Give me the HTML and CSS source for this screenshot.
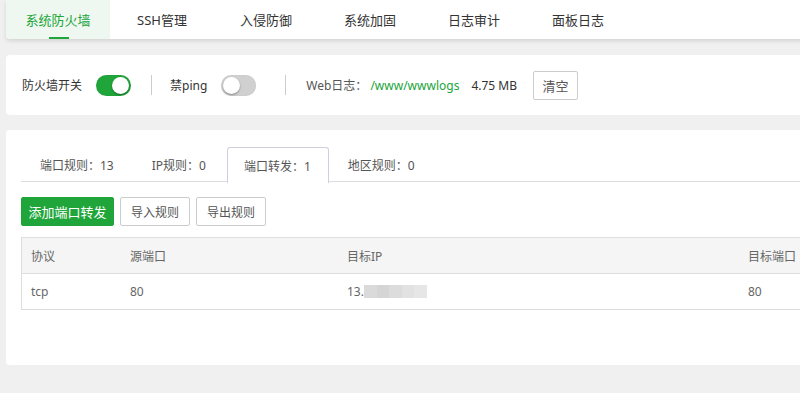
FILE: index.html
```html
<!DOCTYPE html>
<html lang="zh">
<head>
<meta charset="utf-8">
<title>系统防火墙</title>
<link rel="stylesheet" href="styles.css">
</head>
<body>
<div class="page">
  <nav class="topnav">
    <a class="nav-item active">系统防火墙</a>
    <a class="nav-item">SSH管理</a>
    <a class="nav-item">入侵防御</a>
    <a class="nav-item">系统加固</a>
    <a class="nav-item">日志审计</a>
    <a class="nav-item">面板日志</a>
  </nav>

  <section class="card settings">
    <span class="label">防火墙开关</span>
    <span class="switch on"><span class="knob"></span></span>
    <span class="divider"></span>
    <span class="label">禁ping</span>
    <span class="switch"><span class="knob"></span></span>
    <span class="divider wide"></span>
    <span class="label muted">Web日志：</span>
    <span class="link">/www/wwwlogs</span>
    <span class="size">4.75 MB</span>
    <button class="btn btn-clear">清空</button>
  </section>

  <section class="card main">
    <ul class="tabs">
      <li class="tab">端口规则：13</li>
      <li class="tab">IP规则：0</li>
      <li class="tab active">端口转发：1</li>
      <li class="tab">地区规则：0</li>
    </ul>
    <div class="toolbar">
      <button class="btn btn-primary">添加端口转发</button>
      <button class="btn">导入规则</button>
      <button class="btn">导出规则</button>
    </div>
    <div class="table">
      <div class="row head">
        <div class="cell">协议</div>
        <div class="cell">源端口</div>
        <div class="cell">目标IP</div>
        <div class="cell">目标端口</div>
      </div>
      <div class="row">
        <div class="cell">tcp</div>
        <div class="cell">80</div>
        <div class="cell">13.<span class="blur"></span></div>
        <div class="cell">80</div>
      </div>
    </div>
  </section>
</div>
</body>
</html>
```

FILE: styles.css
```css
html, body {
  margin: 0;
  padding: 0;
  background: #f0f0f0;
  overflow: hidden;
}
body {
  font-family: "Noto Sans", "Noto Sans CJK SC", sans-serif;
  font-size: 12px;
  color: #333;
}
.page {
  width: 820px;
  padding-left: 6px;
}
.topnav {
  display: flex;
  height: 39px;
  background: #fff;
  border-radius: 0 0 4px 4px;
  box-shadow: 0 2px 4px rgba(0, 0, 0, 0.12);
  overflow: hidden;
}
.nav-item {
  position: relative;
  width: 104px;
  display: flex;
  align-items: center;
  justify-content: center;
  font-size: 13px;
  color: #333;
}
.nav-item.active {
  background: #eff8f0;
  color: #20a53a;
}
.nav-item.active::after {
  content: "";
  position: absolute;
  left: 43px;
  bottom: 0;
  width: 20px;
  height: 2px;
  background: #20a53a;
}
.card {
  background: #fff;
  border-radius: 4px;
}
.settings {
  margin-top: 16px;
  height: 60px;
  padding-left: 16px;
  display: flex;
  align-items: center;
}
.label {
  color: #333;
}
.label.muted {
  color: #555;
}
.switch {
  position: relative;
  width: 35px;
  height: 21px;
  border-radius: 11px;
  background: #d0d0d0;
  margin-left: 14px;
  box-shadow: inset 0 0 1px rgba(0,0,0,0.15);
}
.switch .knob {
  position: absolute;
  top: 2px;
  left: 2px;
  width: 17px;
  height: 17px;
  border-radius: 50%;
  background: #fff;
  box-shadow: 0 1px 2px rgba(0,0,0,0.35);
}
.switch.on {
  background: #20a53a;
}
.switch.on .knob {
  left: 16px;
}
.divider {
  width: 1px;
  height: 20px;
  background: #ccc;
  margin: 0 18px 0 20px;
}
.divider.wide {
  margin-left: 29px;
  margin-right: 20px;
}
.link {
  color: #20a53a;
  margin-left: 3px;
}
.size {
  margin-left: 12px;
  color: #333;
}
.btn {
  font-family: inherit;
  font-size: 12px;
  color: #555;
  background: #fff;
  border: 1px solid #ccc;
  border-radius: 2px;
  height: 29px;
  padding: 0 10px;
  cursor: pointer;
}
.btn-clear {
  margin-left: 16px;
  width: 45px;
  padding: 0;
  font-size: 13px;
}
.main {
  margin-top: 15px;
  padding: 17px 0 55px 15px;
}
.tabs {
  list-style: none;
  margin: 0;
  padding: 0;
  display: flex;
  height: 34px;
  border-bottom: 1px solid #ddd;
}
.tab {
  padding: 0 18px;
  display: flex;
  align-items: center;
  color: #555;
  border: 1px solid transparent;
  border-bottom: none;
  border-radius: 3px 3px 0 0;
}
.tab.active {
  padding: 0 17px 0 16px;
  margin-left: 2px;
  border-color: #d0d0dc;
  background: #fff;
  height: 35px;
  color: #555;
}
.toolbar {
  margin-top: 15px;
  display: flex;
  gap: 6px;
}
.btn-primary {
  background: #20a53a;
  border-color: #20a53a;
  color: #fff;
  width: 93px;
  padding: 0;
  font-size: 13px;
}
.table {
  margin-top: 11px;
  border: 1px solid #ddd;
  border-top-color: #e0e0e0;
}
.row {
  display: grid;
  grid-template-columns: 99px 217px 401px 1fr;
  height: 35px;
  align-items: center;
  color: #666;
}
.row.head {
  background: #f5f5f5;
  border-bottom: 1px solid #ddd;
}
.cell {
  padding-left: 9px;
  display: flex;
  align-items: center;
}
.blur {
  display: inline-block;
  width: 63px;
  height: 13px;
  background: linear-gradient(90deg, #dadada 0 20%, #d5d5d5 20% 40%, #dcdcdc 40% 60%, #e2e2e2 60% 80%, #e6e6e6 80% 100%);
  filter: blur(0.6px);
}
```
